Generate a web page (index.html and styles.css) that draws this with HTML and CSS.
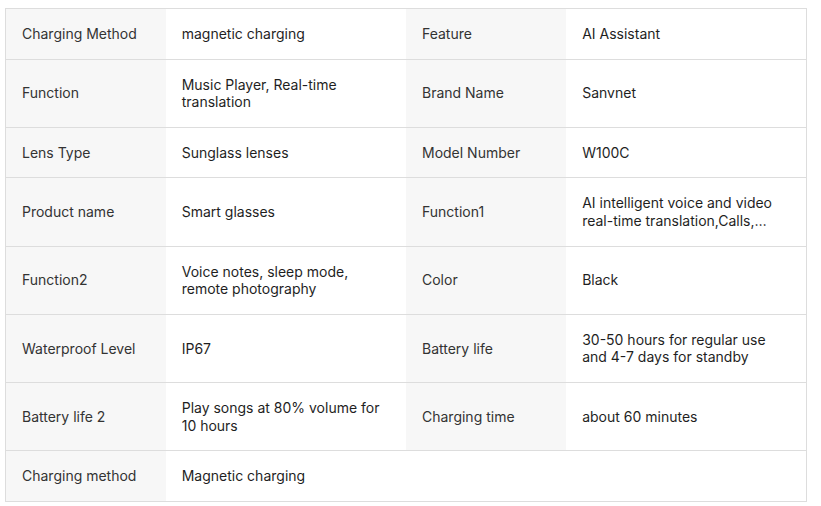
FILE: index.html
```html
<!DOCTYPE html>
<html lang="en">
<head>
<meta charset="utf-8">
<title>Specifications</title>
<link rel="stylesheet" href="styles.css">
</head>
<body>
<div class="wrap">
<table class="spec">
  <colgroup>
    <col class="c-label"><col class="c-value"><col class="c-label"><col class="c-value">
  </colgroup>
  <tbody>
    <tr>
      <th>Charging Method</th><td>magnetic charging</td>
      <th>Feature</th><td>AI Assistant</td>
    </tr>
    <tr>
      <th>Function</th><td>Music Player, Real-time translation</td>
      <th>Brand Name</th><td>Sanvnet</td>
    </tr>
    <tr>
      <th>Lens Type</th><td>Sunglass lenses</td>
      <th>Model Number</th><td>W100C</td>
    </tr>
    <tr>
      <th>Product name</th><td>Smart glasses</td>
      <th>Function1</th><td><div class="clamp">AI intelligent voice and video real-time translation,Calls, music playback, photo taking</div></td>
    </tr>
    <tr>
      <th>Function2</th><td>Voice notes, sleep mode, remote photography</td>
      <th>Color</th><td>Black</td>
    </tr>
    <tr>
      <th>Waterproof Level</th><td>IP67</td>
      <th>Battery life</th><td>30-50 hours for regular use and 4-7 days for standby</td>
    </tr>
    <tr>
      <th>Battery life 2</th><td>Play songs at 80% volume for 10 hours</td>
      <th>Charging time</th><td>about 60 minutes</td>
    </tr>
    <tr class="last">
      <th>Charging method</th><td>Magnetic charging</td>
      <td class="empty" colspan="2"></td>
    </tr>
  </tbody>
</table>
</div>
</body>
</html>
```

FILE: styles.css
```css
html, body {
  margin: 0;
  padding: 0;
  background: #ffffff;
}
body {
  font-family: Inter, "Liberation Sans", Arial, sans-serif;
  font-size: 14px;
  line-height: 17.6px;
  color: #222222;
}
.wrap {
  padding: 8px 0 0 5px;
}
.spec {
  border-collapse: collapse;
  table-layout: fixed;
  width: 802px;
  border: 1px solid #dddddd;
}
.c-label { width: 160px; }
.c-value { width: 240px; }
.spec tr {
  border-bottom: 1px solid #dddddd;
}
.spec th,
.spec td {
  padding: 16px 16px;
  text-align: left;
  vertical-align: middle;
  font-weight: 400;
}
.spec th {
  background: #f7f7f7;
  color: #333333;
}
.spec td {
  background: #ffffff;
  color: #1f1f1f;
}
.clamp {
  display: -webkit-box;
  -webkit-box-orient: vertical;
  -webkit-line-clamp: 2;
  overflow: hidden;
}
```
